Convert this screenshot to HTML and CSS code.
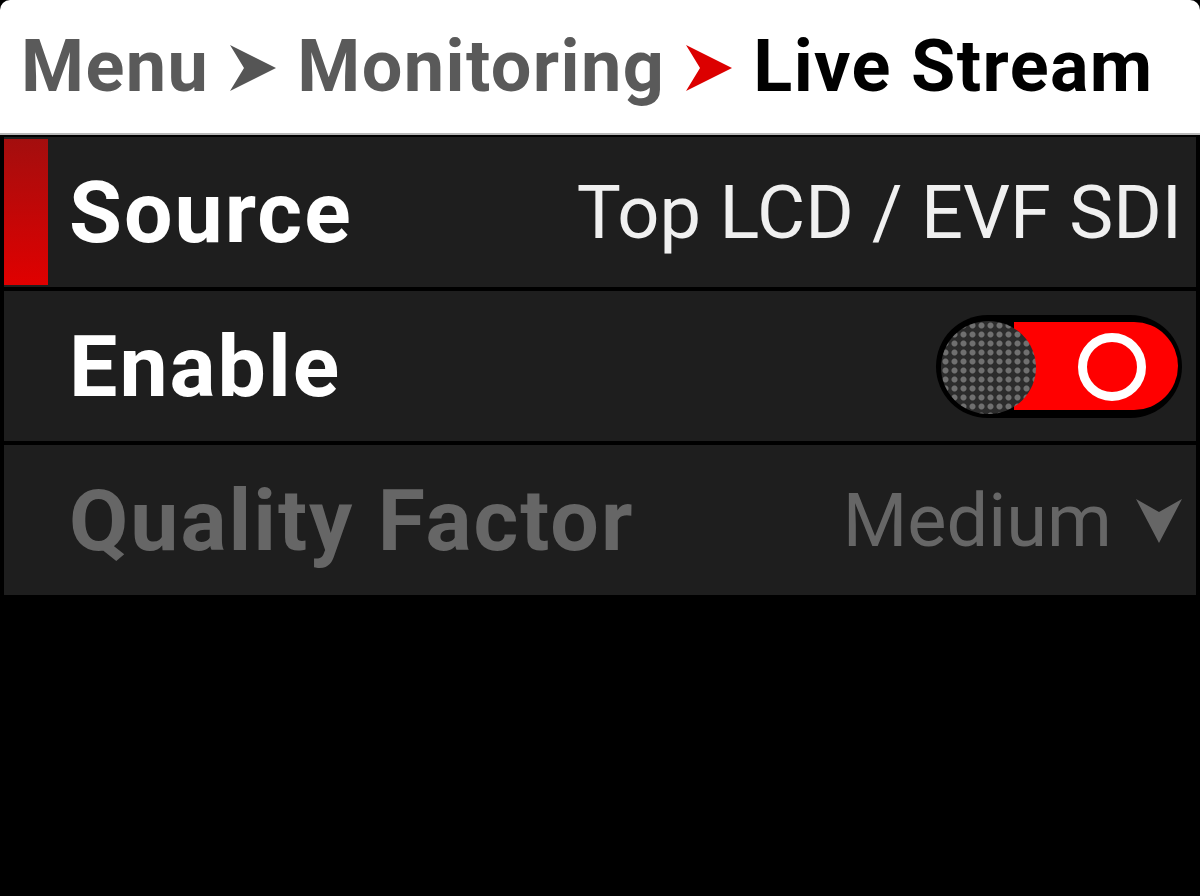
FILE: index.html
```html
<!DOCTYPE html>
<html lang="en">
<head>
  <meta charset="UTF-8">
  <title>Live Stream</title>
  <link rel="stylesheet" href="styles.css">
</head>
<body>

  <div class="crumbs">
    <span class="crumb">Menu</span>
    <svg class="sep" viewBox="0 0 46 46"><polygon points="0,0 46,23 0,46 14,23" fill="#555"/></svg>
    <span class="crumb">Monitoring</span>
    <svg class="sep" viewBox="0 0 46 46"><polygon points="0,0 46,23 0,46 14,23" fill="#dc0000"/></svg>
    <span class="crumb current">Live Stream</span>
  </div>

  <div class="list">
    <div class="row selected">
      <div class="marker"></div>
      <div class="label">Source</div>
      <div class="value">Top LCD / EVF SDI</div>
    </div>

    <div class="row">
      <div class="marker"></div>
      <div class="label">Enable</div>
      <div class="toggle on">
        <div class="knob"></div>
        <div class="ring"></div>
      </div>
    </div>

    <div class="row disabled">
      <div class="marker"></div>
      <div class="label">Quality Factor</div>
      <div class="value">Medium
        <svg class="drop" viewBox="0 0 46 44"><polygon points="0,0 23,13 46,0 23,44" fill="#666"/></svg>
      </div>
    </div>
  </div>

</body>
</html>
```

FILE: styles.css
```css
body {
  margin: 0;
  background: #000;
  font-family: Roboto, "Liberation Sans", sans-serif;
  width: 1200px;
  height: 896px;
  overflow: hidden;
}

.crumbs {
  height: 133px;
  background: #fff;
  border-radius: 10px 10px 0 0;
  border-bottom: 2px solid #b8b8b8;
  display: flex;
  align-items: center;
  padding-left: 21px;
  gap: 21px;
  font-size: 72px;
  font-weight: bold;
  color: #5a5a5a;
  letter-spacing: 1.4px;
}

.crumb.current {
  color: #000;
}

.sep {
  width: 46px;
  height: 46px;
  margin-top: 2px;
}

.list {
  display: flex;
  flex-direction: column;
  gap: 4px;
  padding: 2px 4px 0 4px;
}

.row {
  height: 150px;
  background: #1e1e1e;
  display: flex;
  align-items: center;
  padding-right: 14px;
}

.marker {
  width: 44px;
  align-self: stretch;
  margin: 2px 21px 2px 0;
}

.row.selected .marker {
  background: linear-gradient(#a30e0e, #e00000);
}

.label {
  flex: 1;
  font-size: 86px;
  font-weight: bold;
  color: #fff;
  letter-spacing: 2px;
}

.value {
  font-size: 74px;
  color: #f0f0f0;
  display: flex;
  align-items: center;
  gap: 24px;
}

.row.disabled .label,
.row.disabled .value {
  color: #666;
}

.drop {
  width: 46px;
  height: 44px;
  margin-top: 2px;
}

/* interrupteur */
.toggle {
  position: relative;
  width: 246px;
  height: 103px;
  border-radius: 52px;
  background: #000;
}

.toggle.on::before {
  content: "";
  position: absolute;
  left: 78px;
  top: 7px;
  right: 4px;
  bottom: 8px;
  border-radius: 0 46px 46px 0;
  background: #ff0000;
}

.knob {
  position: absolute;
  left: 5px;
  top: 6px;
  width: 95px;
  height: 93px;
  border-radius: 50%;
  background-color: #2c2c2c;
  background-image: radial-gradient(circle, #707070 2.5px, transparent 3.5px);
  background-size: 9px 9px;
}

.ring {
  position: absolute;
  left: 142px;
  top: 18px;
  width: 50px;
  height: 50px;
  border: 9px solid #fff;
  border-radius: 50%;
  background: #ff0000;
}
```
